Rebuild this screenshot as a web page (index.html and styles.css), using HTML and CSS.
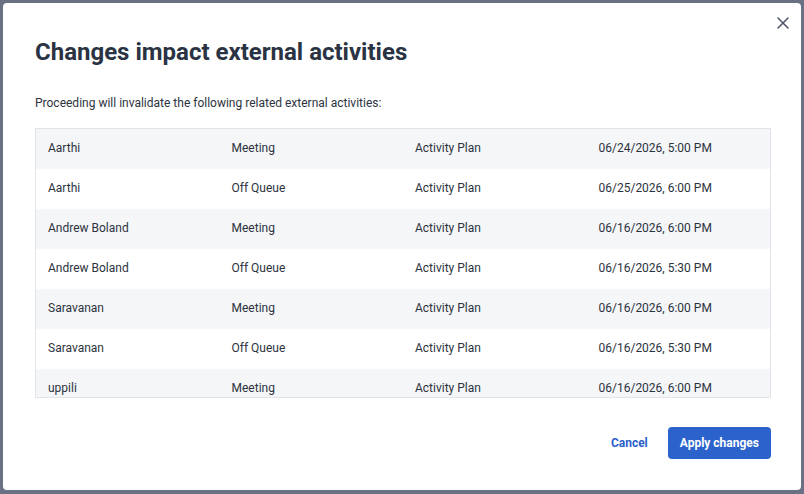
FILE: index.html
```html
<!DOCTYPE html>
<html lang="en">
<head>
<meta charset="utf-8">
<title>Changes impact external activities</title>
<link rel="stylesheet" href="styles.css">
</head>
<body>
<div class="backdrop">
  <div class="modal" role="dialog" aria-labelledby="dlg-title">
    <button class="close" aria-label="Close">
      <svg width="12" height="12" viewBox="0 0 12 12"><path d="M1 1L11 11M11 1L1 11" stroke="#4b5263" stroke-width="1.5" stroke-linecap="round"/></svg>
    </button>
    <h1 id="dlg-title" class="title">Changes impact external activities</h1>
    <p class="desc">Proceeding will invalidate the following related external activities:</p>
    <div class="table-wrap">
      <table class="tbl">
        <tbody>
          <tr><td>Aarthi</td><td>Meeting</td><td>Activity Plan</td><td>06/24/2026, 5:00 PM</td></tr>
          <tr><td>Aarthi</td><td>Off Queue</td><td>Activity Plan</td><td>06/25/2026, 6:00 PM</td></tr>
          <tr><td>Andrew Boland</td><td>Meeting</td><td>Activity Plan</td><td>06/16/2026, 6:00 PM</td></tr>
          <tr><td>Andrew Boland</td><td>Off Queue</td><td>Activity Plan</td><td>06/16/2026, 5:30 PM</td></tr>
          <tr><td>Saravanan</td><td>Meeting</td><td>Activity Plan</td><td>06/16/2026, 6:00 PM</td></tr>
          <tr><td>Saravanan</td><td>Off Queue</td><td>Activity Plan</td><td>06/16/2026, 5:30 PM</td></tr>
          <tr><td>uppili</td><td>Meeting</td><td>Activity Plan</td><td>06/16/2026, 6:00 PM</td></tr>
        </tbody>
      </table>
    </div>
    <div class="actions">
      <button class="btn-link">Cancel</button>
      <button class="btn-primary">Apply changes</button>
    </div>
  </div>
</div>
</body>
</html>
```

FILE: styles.css
```css
* { box-sizing: border-box; }
html, body { margin: 0; padding: 0; }
body {
  width: 804px;
  height: 494px;
  overflow: hidden;
  background: #6b7184;
  font-family: Roboto, "Noto Sans", sans-serif;
  color: #2c3340;
}
.backdrop {
  padding: 3px 3px 4px 3px;
  height: 100%;
}
.modal {
  position: relative;
  width: 798px;
  height: 487px;
  background: #fff;
  border-radius: 4px;
  padding: 33px 30px 0 32px;
  display: flex;
  flex-direction: column;
}
.close {
  position: absolute;
  top: 11px;
  right: 9px;
  width: 18px;
  height: 18px;
  border: 0;
  background: none;
  padding: 3px;
  display: flex;
  align-items: center;
  justify-content: center;
  cursor: pointer;
}
.title {
  margin: 0;
  font-size: 24px;
  line-height: 32px;
  font-weight: 700;
  color: #2a3343;
}
.desc {
  margin: 27px 0 0 0;
  font-size: 12px;
  line-height: 16px;
  color: #2c3340;
}
.table-wrap {
  margin-top: 17px;
  border: 1px solid #e1e4ea;
  height: 270px;
  overflow: hidden;
}
.tbl {
  width: 100%;
  border-collapse: collapse;
  table-layout: fixed;
  font-size: 12px;
  color: #2c3340;
}
.tbl td {
  height: 40px;
  padding: 0 12px 2px 12px;
  vertical-align: middle;
}
.tbl tr:nth-child(odd) { background: #f5f6f8; }
.actions {
  margin-top: 29px;
  display: flex;
  justify-content: flex-end;
  align-items: center;
  gap: 20px;
}
.btn-link {
  border: 0;
  background: none;
  font-family: Roboto, sans-serif;
  font-size: 12px;
  font-weight: 700;
  color: #2a5fcb;
  padding: 0;
  cursor: pointer;
}
.btn-primary {
  border: 0;
  height: 32px;
  padding: 0 12px;
  border-radius: 4px;
  background: #2b62cb;
  color: #fff;
  font-family: Roboto, sans-serif;
  font-size: 12px;
  font-weight: 700;
  cursor: pointer;
}
```
